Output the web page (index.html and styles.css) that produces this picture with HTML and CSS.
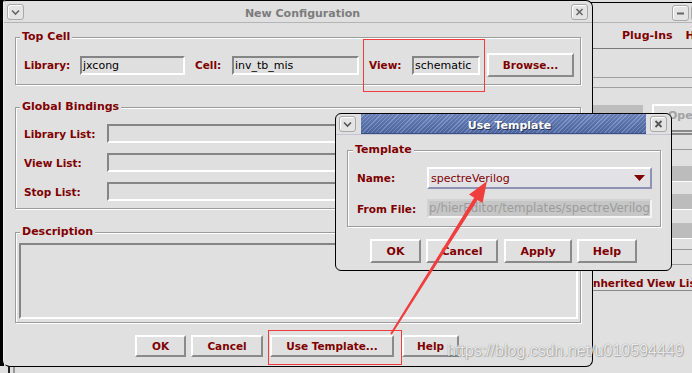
FILE: index.html
```html
<!DOCTYPE html>
<html>
<head>
<meta charset="utf-8">
<title>New Configuration</title>
<link rel="stylesheet" href="styles.css">
</head>
<body>
<div class="desktop">
  <div class="edge"></div>
  <div class="foot"></div>

  <!-- background window on the right -->
  <div class="bgwin">
    <div class="bg-title">
      <span class="wbtn"><svg width="15" height="14" viewBox="0 0 15 14"><path d="M4 7.5h7" stroke="#666" stroke-width="2"/></svg></span>
      <span class="wbtn"></span>
    </div>
    <div class="bg-menu"><span>Plug-Ins</span><span>Help</span></div>
    <div class="bg-sep1"></div>
    <div class="bg-sep2"></div>
    <div class="bg-row1">
      <div class="bg-box"></div>
      <div class="bg-btn">Open...</div>
    </div>
    <div class="bg-line thick"></div>
    <div class="bg-line l1"></div>
    <div class="bg-field f1"></div>
    <div class="bg-field f2"></div>
    <div class="bg-field f3"></div>
    <div class="bg-line l2"></div>
    <div class="bg-line l3"></div>
    <div class="bg-label">Inherited View List</div>
  </div>

  <!-- main window -->
  <div class="main">
    <div class="titlebar">
      <span class="wbtn"><svg width="15" height="14" viewBox="0 0 15 14"><path d="M4 5.5l3.5 3.5 3.5-3.5" fill="none" stroke="#666" stroke-width="1.6"/></svg></span>
      <span class="wtitle">New Configuration</span>
      <span class="wbtn"><svg width="15" height="14" viewBox="0 0 15 14"><path d="M4.5 4l6 6M10.5 4l-6 6" stroke="#666" stroke-width="1.6"/></svg></span>
    </div>
    <div class="content">
      <fieldset class="group top">
        <legend>Top Cell</legend>
        <div class="row r24">
          <span class="lbl w56">Library:</span>
          <span class="field w105">jxcong</span>
          <span class="lbl ml10 w37">Cell:</span>
          <span class="field w127">inv_tb_mis</span>
          <span class="lbl ml10 w43">View:</span>
          <span class="field w68">schematic</span>
          <span class="btn browse">Browse...</span>
        </div>
      </fieldset>

      <fieldset class="group global">
        <legend>Global Bindings</legend>
        <div class="row"><span class="lbl w83">Library List:</span><span class="field grow"></span></div>
        <div class="row"><span class="lbl w83">View List:</span><span class="field grow"></span></div>
        <div class="row"><span class="lbl w83">Stop List:</span><span class="field grow"></span></div>
      </fieldset>

      <fieldset class="group desc">
        <legend>Description</legend>
        <div class="textarea"></div>
      </fieldset>

      <div class="btnrow">
        <span class="btn b-ok">OK</span>
        <span class="btn b-cancel">Cancel</span>
        <span class="btn b-use">Use Template...</span>
        <span class="btn b-help">Help</span>
      </div>
    </div>
  </div>

  <!-- Use Template dialog -->
  <div class="dialog">
    <div class="dlg-title">
      <span class="dlg-side left"><span class="wbtn"><svg width="15" height="14" viewBox="0 0 15 14"><path d="M4 5.5l3.5 3.5 3.5-3.5" fill="none" stroke="#555" stroke-width="1.6"/></svg></span></span>
      <span class="dlg-band">Use Template</span>
      <span class="dlg-side right"><span class="wbtn"><svg width="15" height="14" viewBox="0 0 15 14"><path d="M4.5 4l6 6M10.5 4l-6 6" stroke="#555" stroke-width="1.8"/></svg></span></span>
    </div>
    <fieldset class="group tmpl">
      <legend>Template</legend>
      <div class="row r22">
        <span class="lbl w70">Name:</span>
        <span class="combo"><span class="combo-text">spectreVerilog</span><svg class="caret" width="11" height="6" viewBox="0 0 11 6"><path d="M0 0h11L5.5 6z" fill="#800000"/></svg></span>
      </div>
      <div class="row">
        <span class="lbl w70">From File:</span>
        <span class="field disabled grow">p/hierEditor/templates/spectreVerilog</span>
      </div>
    </fieldset>
    <div class="dlg-btns">
      <span class="btn d-ok">OK</span>
      <span class="btn d-cancel">Cancel</span>
      <span class="btn d-apply">Apply</span>
      <span class="btn d-help">Help</span>
    </div>
  </div>

  <!-- annotations -->
  <div class="redbox rb-view"></div>
  <div class="redbox rb-use"></div>
  <svg class="arrow" width="692" height="373" viewBox="0 0 692 373">
    <polygon points="390.2,333.5 474.2,197.7 469.1,194.5 487,181 482.6,203 477.5,199.9 391.9,334.5" fill="#f03e3e"/>
  </svg>
  <div class="watermark">https://blog.csdn.net/u010594449</div>
</div>
</body>
</html>
```

FILE: styles.css
```css
* { box-sizing: border-box; }
html, body { margin: 0; padding: 0; }
body {
  width: 692px;
  height: 373px;
  overflow: hidden;
  background: #dfdfdf;
  font-family: "DejaVu Sans", sans-serif;
}
.desktop {
  position: relative;
  width: 692px;
  height: 373px;
  overflow: hidden;
  background: #dfdfdf;
}
.edge {
  position: absolute;
  left: 0; top: 0;
  width: 4px; height: 366px;
  background: #000;
}
.foot {
  position: absolute;
  left: 8px; top: 366px;
  width: 7px; height: 8px;
  border-left: 2px solid #222;
  border-right: 2px solid #999;
}

/* generic widgets */
.wbtn {
  width: 17px; height: 16px;
  border: 1px solid #a9a9a9;
  border-radius: 3px;
  background: #e4e4e4;
  box-shadow: inset 1px 1px 0 #fff;
  display: flex; align-items: center; justify-content: center;
  flex: none;
}
.lbl {
  font-weight: bold;
  font-size: 10.5px;
  color: #800000;
  white-space: nowrap;
  flex: none;
}
.field {
  height: 19px;
  border: 2px solid;
  border-color: #858585 #fff #fff #858585;
  background: #dfdfdf;
  font-size: 11px;
  line-height: 15px;
  color: #000;
  padding: 0 1px;
  white-space: nowrap;
  overflow: hidden;
  flex: none;
}
.field.grow { flex: 1; }
.btn {
  border: 2px solid;
  border-color: #fff #8a8a8a #8a8a8a #fff;
  background: #e0e0e0;
  font-weight: bold;
  font-size: 10.5px;
  color: #800000;
  display: flex; align-items: center; justify-content: center;
  white-space: nowrap;
  flex: none;
}
.row { display: flex; align-items: center; }
.r24 { height: 24px; }
.r22 { height: 22px; }
.w56 { width: 56px; } .w37 { width: 37px; } .w43 { width: 43px; }
.w83 { width: 83px; } .w70 { width: 70px; }
.w105 { width: 105px; } .w127 { width: 127px; } .w68 { width: 68px; }
.ml10 { margin-left: 10px; }

/* group frames */
fieldset.group {
  margin: 0;
  min-width: 0;
  border: 1px solid #9c9c9c;
  box-shadow: inset 1px 1px 0 #fff, 1px 1px 0 #fff;
}
fieldset.group > legend {
  padding: 0 2px;
  margin-left: -4px;
  font-weight: bold;
  font-size: 11px;
  line-height: 12px;
  color: #800000;
  background: #e0e0e0;
}

/* main window */
.main {
  position: absolute;
  left: 3px; top: 0;
  width: 590px; height: 367px;
  border: 1px solid #000;
  border-left-color: #ececec;
  border-radius: 3px 7px 7px 7px;
  background: #e0e0e0;
  display: flex; flex-direction: column;
}
.titlebar {
  height: 22px;
  border-bottom: 1px solid #b4b4b4;
  display: flex; align-items: center;
  padding: 0 4px 0 3px;
  flex: none;
}
.wtitle {
  flex: 1;
  text-align: center;
  padding: 3px 0 0 10px;
  font-weight: bold;
  font-size: 11px;
  color: #7c7c7c;
}
.content { padding: 0 11px; display: flex; flex-direction: column; }
fieldset.top { margin-top: 8px; padding: 10px 6px 7px 8px; }
.browse { margin-left: 7px; width: 87px; height: 24px; }
fieldset.global { margin-top: 16px; padding: 11px 3px 7px 8px; display: flex; flex-direction: column; gap: 10px; }
.global .row { height: 19px; }
fieldset.desc { margin-top: 17px; padding: 5px 2px 3px 3px; }
fieldset.desc > legend { margin-left: 1px; }
.textarea {
  height: 76px;
  border: 2px solid;
  border-color: #858585 #fff #fff #858585;
}
.btnrow { display: flex; margin-top: 12px; padding-left: 120px; }
.btnrow .btn { height: 22px; }
.b-ok { width: 51px; }
.b-cancel { width: 72px; margin-left: 5px; }
.b-use { width: 124px; margin-left: 7px; }
.b-help { width: 57px; margin-left: 8px; }

/* background window */
.bgwin {
  position: absolute;
  left: 588px; top: 2px;
  width: 110px; height: 371px;
  border-top: 1px solid #000;
  background: #e0e0e0;
  display: flex; flex-direction: column;
}
.bg-title {
  height: 20px;
  border-bottom: 1px solid #b4b4b4;
  display: flex; align-items: center; gap: 2px;
  padding-left: 84px;
  flex: none;
}
.bg-menu {
  height: 26px;
  border-bottom: 1px solid #7a7a7a;
  display: flex; align-items: center; gap: 13px;
  padding-left: 34px;
  font-weight: bold; font-size: 11px; color: #800000;
  white-space: nowrap;
  flex: none;
}
.bg-menu span { flex: none; }
.bg-sep1 { height: 29px; border-bottom: 1px solid #a0a0a0; flex: none; }
.bg-sep2 { height: 10px; border-bottom: 1px solid #a0a0a0; flex: none; }
.bg-row1 { margin-top: 16px; height: 28px; display: flex; align-items: flex-start; flex: none; }
.bg-box { margin: 1px 0 0 5px; width: 50px; height: 22px; background: #bdbdbd; border-bottom: 2px solid #fff; flex: none; }
.bg-btn { margin-left: 9px; width: 80px; height: 28px; border: 2px solid; border-color: #fff #8a8a8a #8a8a8a #fff; font-weight: bold; font-size: 11px; color: #a2a2a2; padding: 3px 0 0 14px; flex: none; white-space: nowrap; }
.bg-line { height: 0; border-top: 1px solid #9a9a9a; flex: none; }
.bg-line.thick { border-top: 2px solid #8a8a8a; margin-top: 1px; }
.bg-line.l1 { margin-top: 14px; }
.bg-field { margin-left: 10px; height: 16px; background: #bcbcbc; border-bottom: 1px solid #fff; flex: none; }
.f1 { margin-top: 16px; } .f2 { margin-top: 12px; } .f3 { margin-top: 13px; }
.bg-line.l2 { margin-top: 10px; }
.bg-line.l3 { margin-top: 14px; }
.bg-label { margin-top: 12px; padding-left: 1px; height: 13px; font-weight: bold; font-size: 10.5px; line-height: 13px; color: #800000; white-space: nowrap; border-bottom: 1px solid #888; box-sizing: content-box; flex: none; }

/* dialog */
.dialog {
  position: absolute;
  left: 335px; top: 113px;
  width: 337px; height: 158px;
  border: 1px solid #000;
  border-radius: 6px;
  background: #e0e0e0;
  display: flex; flex-direction: column;
}
.dlg-title {
  height: 21px;
  display: flex;
  border-bottom: 1px solid #c4c4d4;
  flex: none;
}
.dlg-side { width: 25px; display: flex; align-items: center; flex: none; }
.dlg-side.left { padding-left: 3px; }
.dlg-side.right { width: 25px; padding-left: 4px; }
.dlg-band {
  flex: 1;
  display: flex; align-items: center; justify-content: center;
  padding: 3px 0 0 12px;
  font-weight: bold; font-size: 11px; color: #fff;
  text-shadow: 1px 1px 0 #2a3550;
  background:
    linear-gradient(rgba(255,255,255,0.12), rgba(0,0,0,0.08)),
    repeating-linear-gradient(135deg, #536ca9 0 2px, #7590c9 2px 3px);
  border-bottom: 1px solid #3c4f80;
}
fieldset.tmpl { margin: 9px 10px 0 11px; padding: 11px 8px 8px 9px; display: flex; flex-direction: column; gap: 10px; }
.combo {
  flex: 1;
  height: 22px;
  border: 2px solid;
  border-color: #fff #8f93b3 #8f93b3 #fff;
  background: #e2e2e6;
  display: flex; align-items: center;
  padding: 0 5px 0 2px;
}
.combo-text { flex: 1; font-size: 11px; color: #800000; }
.caret { flex: none; }
.field.disabled { background: #c6c6c6; color: #9c9c9c; border-color: #d2d2d2 #f4f4f4 #f4f4f4 #d2d2d2; padding-left: 0; font-size: 11.8px; }
.dlg-btns { display: flex; margin-top: 12px; padding-left: 34px; }
.dlg-btns .btn { height: 24px; font-size: 11px; }
.d-ok { width: 51px; }
.d-cancel { width: 72px; margin-left: 5px; }
.d-apply { width: 68px; margin-left: 6px; }
.d-help { width: 60px; margin-left: 5px; }

/* annotations */
.redbox { position: absolute; border: 1px solid #f03c3c; }
.rb-view { left: 363px; top: 39px; width: 122px; height: 53px; }
.rb-use { left: 268px; top: 330px; width: 134px; height: 35px; }
.arrow { position: absolute; left: 0; top: 0; pointer-events: none; }
.watermark {
  position: absolute;
  left: 447px; top: 342px;
  font-family: "Liberation Sans", Arial, sans-serif;
  font-size: 16px;
  color: rgba(255,255,255,0.85);
  text-shadow: 0 0 1px rgba(0,0,0,0.45), 1px 1px 1px rgba(0,0,0,0.2);
  white-space: nowrap;
  pointer-events: none;
}
```
